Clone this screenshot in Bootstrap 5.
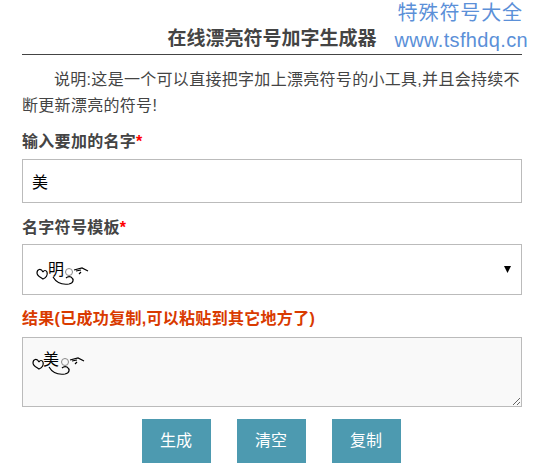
<!DOCTYPE html>
<html lang="zh">
<head>
<meta charset="utf-8">
<title>在线漂亮符号加字生成器</title>
<link href="https://cdn.jsdelivr.net/npm/bootstrap@5.3.0/dist/css/bootstrap.min.css" rel="stylesheet">
<style>
body{background:#fff;color:#444;font-family:"Liberation Sans","Noto Sans CJK SC",sans-serif;font-size:16px;overflow:hidden}
.tool-wrap{width:500px;margin-left:22px;position:relative;padding-top:26px}
.brand-mark{position:absolute;top:-2px;right:-6px;width:140px;text-align:right;color:#5b90d8;line-height:1}
.brand-cn{font-size:20px;letter-spacing:.9px;margin:4px 5px 5px 0;line-height:22px}
.brand-url{font-size:20px;letter-spacing:.35px;line-height:22px}
.tool-title{font-size:19px;font-weight:700;line-height:26px;margin:0;padding-bottom:2px;border-bottom:1px solid #444;text-align:center;color:#444}
.tool-intro{text-indent:32px;line-height:26px;margin:12px 0 0;color:#444;letter-spacing:.3px}
.tool-label{display:block;font-weight:700;line-height:24px;margin:0;color:#444;letter-spacing:.3px}
.req{color:#f00}
.field-a{margin-top:11px}
.field-b{margin-top:13px}
.field-c{margin-top:12px}
.tool-label.done{color:#d93a00}
.tool-input{border:1px solid #bbb;border-radius:0;color:#000;font-size:16px;height:44px;padding:0 9px 1px;margin-top:5px;box-shadow:none}
.tool-select{border:1px solid #bbb;border-radius:0;color:#000;font-size:16px;height:51px;padding:0 30px 0 25px;margin-top:4px;background-position:right 10px center;background-size:7px 7px;background-image:url("data:image/svg+xml,%3csvg xmlns='http://www.w3.org/2000/svg' viewBox='0 0 8 8'%3e%3cpath d='M0 0h8L4 8z' fill='%23000'/%3e%3c/svg%3e")}
.tool-area{border:1px solid #bbb;border-radius:0;background:#f9f9f9;color:#000;font-size:16px;height:70px;line-height:20px;padding:12px 0 0 20px;margin-top:6px;display:block;resize:vertical;box-shadow:none}
.deco-host{position:relative}
.deco{position:absolute;pointer-events:none}
.deco-select{left:14px;top:16px}
.deco-area{left:10px;top:13px}
.tool-actions{margin-top:12px;gap:26px;padding-right:2px}
.tool-btn{width:69px;height:44px;background:#4d9ab0;color:#fff;border:0;border-radius:0;padding:0;font-size:16px}
.tool-btn:hover{background:#4d9ab0;color:#fff}
</style>
</head>
<body>
<div class="tool-wrap">
  <div class="brand-mark">
    <div class="brand-cn">特殊符号大全</div>
    <div class="brand-url">www.tsfhdq.cn</div>
  </div>
  <h1 class="tool-title">在线漂亮符号加字生成器</h1>
  <p class="tool-intro">说明:这是一个可以直接把字加上漂亮符号的小工具,并且会持续不断更新漂亮的符号!</p>
  <form>
    <div class="field-a">
      <label class="tool-label" for="nm">输入要加的名字<span class="req">*</span></label>
      <input id="nm" class="form-control tool-input" value="美">
    </div>
    <div class="field-b">
      <label class="tool-label" for="tp">名字符号模板<span class="req">*</span></label>
      <div class="deco-host">
        <select id="tp" class="form-select tool-select"><option>明</option></select>
        <svg class="deco deco-select" width="55" height="30" viewBox="0 0 55 30" fill="none" stroke="#000" stroke-width="1.2">
          <path d="M7 12C5 8 1 9 1 13C1 16 4 17 7 19C10 18 12 15 11 12C10 10 8 10 7 12"/>
          <path d="M17 17C20 22 26 25 33 24C38 23 38 19 35 17C33 16 31 17 30 18"/>
          <circle cx="33" cy="12" r="3.5" stroke="#888" stroke-width="1"/>
          <path d="M38 10L46 8L52 11M40 11L45 10M43 14L45 12"/>
        </svg>
      </div>
    </div>
    <div class="field-c">
      <label class="tool-label done" for="rs">结果(已成功复制,可以粘贴到其它地方了)</label>
      <div class="deco-host">
        <textarea id="rs" class="form-control tool-area">美</textarea>
        <svg class="deco deco-area" width="55" height="30" viewBox="0 0 55 30" fill="none" stroke="#000" stroke-width="1.2">
          <path d="M7 12C5 8 1 9 1 13C1 16 4 17 7 19C10 18 12 15 11 12C10 10 8 10 7 12"/>
          <path d="M17 17C20 22 26 25 33 24C38 23 38 19 35 17C33 16 31 17 30 18"/>
          <circle cx="33" cy="12" r="3.5" stroke="#888" stroke-width="1"/>
          <path d="M38 10L46 8L52 11M40 11L45 10M43 14L45 12"/>
        </svg>
      </div>
    </div>
    <div class="d-flex justify-content-center tool-actions">
      <button type="button" class="btn tool-btn">生成</button>
      <button type="button" class="btn tool-btn">清空</button>
      <button type="button" class="btn tool-btn">复制</button>
    </div>
  </form>
</div>
<script src="https://cdn.jsdelivr.net/npm/bootstrap@5.3.0/dist/js/bootstrap.bundle.min.js"></script>
</body>
</html>
